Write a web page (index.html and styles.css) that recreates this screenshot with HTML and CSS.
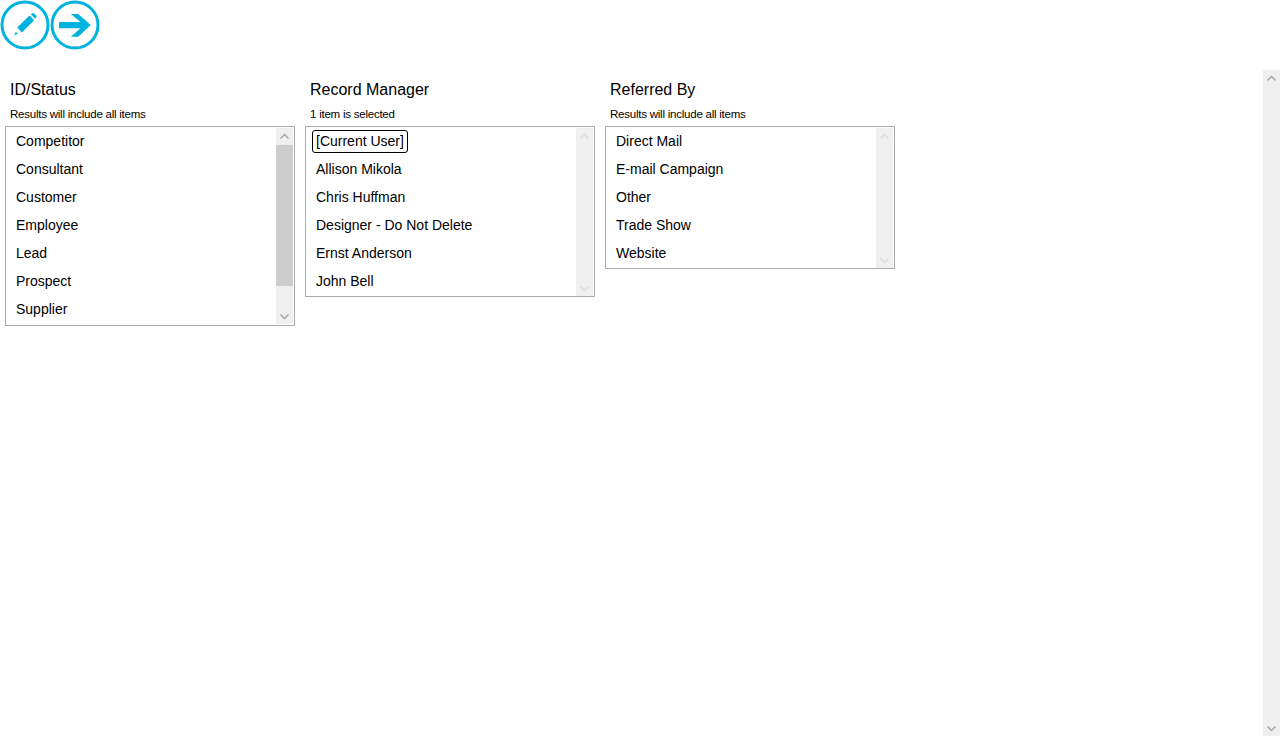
FILE: index.html
```html
<!DOCTYPE html>
<html lang="en">
<head>
<meta charset="utf-8">
<title>Filters</title>
<link rel="stylesheet" href="styles.css">
</head>
<body>
<div class="toolbar">
  <button class="round-btn" aria-label="Edit">
    <svg width="50" height="50" viewBox="0 0 50 50"><circle cx="25" cy="25" r="23" class="ring"/><path class="fill" d="M17.3 27.5 L29.5 15.5 L34.2 20.2 L21.8 32.6 Z M30.9 14.4 L32.4 13.2 Q33.4 12.8 34.2 13.5 L36.2 15.5 Q37 16.5 36.2 17.5 L35.4 19 Z"/><path class="fill" d="M15.8 31.8 L17.8 33.8 L14 35.4 Z"/></svg>
  </button>
  <button class="round-btn" aria-label="Next">
    <svg width="50" height="50" viewBox="0 0 50 50"><circle cx="25" cy="25" r="23" class="ring"/><path class="fill" d="M9 22 H30.5 L20.8 14 H28.3 L40.7 25 L28.3 36.7 H20.8 L30.5 28.3 H9 Z"/></svg>
  </button>
</div>
<div class="content">
  <main class="filters">
    <section class="filter">
      <h2 class="filter-title">ID/Status</h2>
      <p class="filter-note">Results will include all items</p>
      <div class="listbox">
        <ul class="options">
          <li>Competitor</li><li>Consultant</li><li>Customer</li><li>Employee</li><li>Lead</li><li>Prospect</li><li>Supplier</li>
        </ul>
        <div class="sb sb-active">
          <svg class="sb-arrow" width="17" height="17" viewBox="0 0 17 17"><path d="M4.5 10.5 L8.5 6.5 L12.5 10.5"/></svg>
          <div class="sb-track"><div class="sb-thumb"></div></div>
          <svg class="sb-arrow" width="17" height="17" viewBox="0 0 17 17"><path d="M4.5 7.5 L8.5 11.5 L12.5 7.5"/></svg>
        </div>
      </div>
    </section>
    <section class="filter">
      <h2 class="filter-title">Record Manager</h2>
      <p class="filter-note">1 item is selected</p>
      <div class="listbox listbox-flush">
        <ul class="options">
          <li><span class="selected">[Current User]</span></li><li>Allison Mikola</li><li>Chris Huffman</li><li>Designer - Do Not Delete</li><li>Ernst Anderson</li><li>John Bell</li>
        </ul>
        <div class="sb">
          <svg class="sb-arrow" width="17" height="17" viewBox="0 0 17 17"><path d="M4.5 10.5 L8.5 6.5 L12.5 10.5"/></svg>
          <div class="sb-track"></div>
          <svg class="sb-arrow" width="17" height="17" viewBox="0 0 17 17"><path d="M4.5 7.5 L8.5 11.5 L12.5 7.5"/></svg>
        </div>
      </div>
    </section>
    <section class="filter">
      <h2 class="filter-title">Referred By</h2>
      <p class="filter-note">Results will include all items</p>
      <div class="listbox listbox-flush">
        <ul class="options">
          <li>Direct Mail</li><li>E-mail Campaign</li><li>Other</li><li>Trade Show</li><li>Website</li>
        </ul>
        <div class="sb">
          <svg class="sb-arrow" width="17" height="17" viewBox="0 0 17 17"><path d="M4.5 10.5 L8.5 6.5 L12.5 10.5"/></svg>
          <div class="sb-track"></div>
          <svg class="sb-arrow" width="17" height="17" viewBox="0 0 17 17"><path d="M4.5 7.5 L8.5 11.5 L12.5 7.5"/></svg>
        </div>
      </div>
    </section>
  </main>
  <div class="sb page-sb sb-active">
    <svg class="sb-arrow" width="17" height="17" viewBox="0 0 17 17"><path d="M4.5 10.5 L8.5 6.5 L12.5 10.5"/></svg>
    <div class="sb-track"></div>
    <svg class="sb-arrow" width="17" height="17" viewBox="0 0 17 17"><path d="M4.5 7.5 L8.5 11.5 L12.5 7.5"/></svg>
  </div>
</div>
</body>
</html>
```
FILE: styles.css
```css
* { box-sizing: border-box; }
html, body { margin: 0; height: 100%; }
body {
  display: flex;
  flex-direction: column;
  height: 736px;
  overflow: hidden;
  background: #fff;
  color: #000;
  font-family: "Liberation Sans", Arial, sans-serif;
}
.toolbar { display: flex; height: 70px; align-items: flex-start; }
.round-btn { width: 50px; height: 50px; padding: 0; border: 0; background: none; display: block; }
.round-btn svg { display: block; }
.ring { fill: #fff; stroke: #00b2de; stroke-width: 3; }
.fill { fill: #00b2de; }
.content { flex: 1; display: flex; min-height: 0; }
.filters { flex: 1; display: flex; align-items: flex-start; gap: 10px; padding-left: 5px; }
.filter { width: 290px; }
.filter-title { margin: 0; padding: 10px 0 0 5px; height: 33px; font-size: 16px; line-height: 19px; font-weight: 400; }
.filter-note { margin: 0; padding-left: 5px; height: 23px; font-size: 11.5px; line-height: 22px; letter-spacing: -0.23px; }
.listbox { display: flex; width: 290px; border: 1px solid #ababab; padding: 1px; }
.listbox-flush { padding-bottom: 0; }
.options { flex: 1; margin: 0; padding: 0; list-style: none; font-size: 14px; }
.options li { height: 28px; line-height: 26px; padding-left: 9px; }
.selected { display: inline-block; height: 23px; line-height: 20px; margin: 1px 0 0 -4px; padding: 0 3px; border: 1px solid #000; border-radius: 3px; }
.sb { width: 17px; display: flex; flex-direction: column; background: #efefef; flex: none; }
.sb-arrow { display: block; flex: none; fill: none; stroke: #dcdcdc; stroke-width: 1.5; }
.sb-active .sb-arrow { stroke: #a6a6a6; }
.sb-track { flex: 1; }
.sb-thumb { height: 141px; background: #cdcdcd; }
.page-sb { height: 666px; }
```
